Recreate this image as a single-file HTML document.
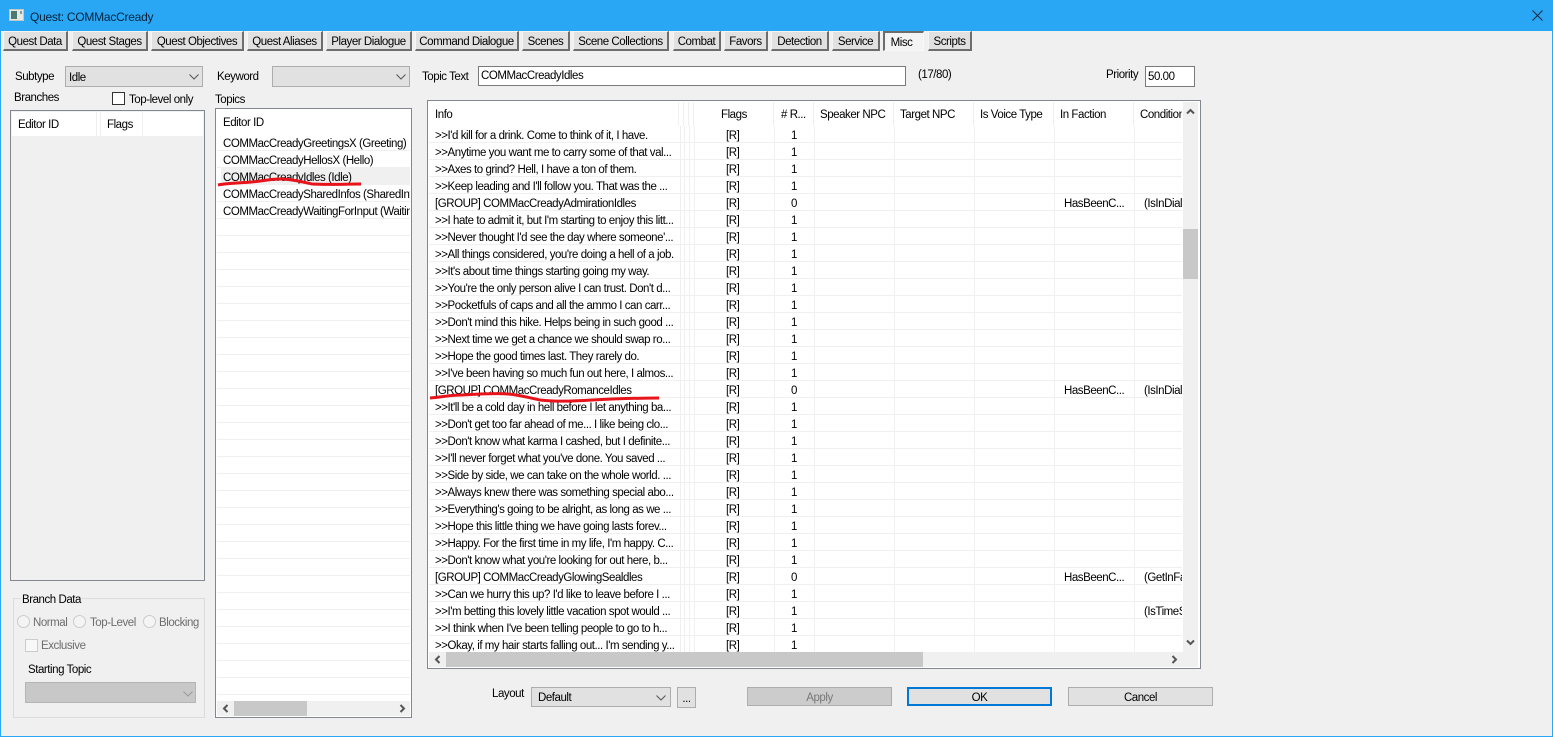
<!DOCTYPE html>
<html><head><meta charset="utf-8"><title>Quest: COMMacCready</title>
<style>
html,body{margin:0;padding:0;width:1553px;height:737px;overflow:hidden;background:#f0f0f0}
body{position:relative;font:11.5px/16px "Liberation Sans",sans-serif;letter-spacing:-.45px;color:#000}
.a{position:absolute;white-space:nowrap}
.l{position:absolute;white-space:nowrap;height:14px;line-height:16px}
.tab{position:absolute;top:31px;height:20px;box-sizing:border-box;background:#e1e1e1;border-top:1px solid #f4f4f4;border-left:1px solid #f4f4f4;border-right:2px solid #6d6d6d;border-bottom:2px solid #6d6d6d;text-align:center;line-height:20px;white-space:nowrap;overflow:hidden}
.combo{position:absolute;box-sizing:border-box;border:1px solid #adadad;background:#e1e1e1}
.box{position:absolute;box-sizing:border-box;border:1px solid #828790;background:#fff}
.btn{position:absolute;box-sizing:border-box;border:1px solid #adadad;background:#e1e1e1;text-align:center;line-height:20px}
.r{position:absolute;left:435px;height:14px;line-height:16px;white-space:nowrap}
.r b{font-weight:normal;position:absolute;top:0}
.vb{position:absolute;top:126px;height:526px;width:1px;background:#f0f0f0}
.vh{position:absolute;top:102px;height:24px;width:1px;background:#f0f0f0}
.radio{position:absolute;box-sizing:border-box;width:13px;height:13px;border:1px solid #ccc;border-radius:50%;background:#f4f4f4}
svg{position:absolute;overflow:visible}
</style></head><body>

<!-- window frame -->
<div class="a" style="left:0;top:0;width:1553px;height:31px;background:#29a6f4"></div>
<div class="a" style="left:0;top:0;width:1px;height:737px;background:#29a6f4"></div>
<div class="a" style="left:1552px;top:0;width:1px;height:737px;background:#29a6f4"></div>
<div class="a" style="left:0;top:736px;width:1553px;height:1px;background:#29a6f4"></div>

<!-- title icon -->
<div class="a" style="left:9px;top:9px;width:15px;height:12px;background:#e6e8e6;border:1px solid #c4c8c8;box-sizing:border-box"></div>
<div class="a" style="left:11px;top:11px;width:6px;height:8px;background:#4d7a70"></div>
<div class="a" style="left:20px;top:11px;width:2px;height:3px;background:#8a9aa0"></div>
<div class="l" style="left:30px;top:9px;color:#04233c;font-size:12px;letter-spacing:-.25px">Quest: COMMacCready</div>
<svg style="left:1532px;top:10px" width="11" height="11"><path d="M.5.5l10 10M10.500.5l-10 10" stroke="#0b2a40" fill="none"/></svg>

<!-- tabs -->
<div class="tab" style="left:3px;width:65px">Quest Data</div>
<div class="tab" style="left:72px;width:76px">Quest Stages</div>
<div class="tab" style="left:151px;width:93px">Quest Objectives</div>
<div class="tab" style="left:247px;width:76px">Quest Aliases</div>
<div class="tab" style="left:326px;width:86px">Player Dialogue</div>
<div class="tab" style="left:415px;width:104px">Command Dialogue</div>
<div class="tab" style="left:522px;width:48px">Scenes</div>
<div class="tab" style="left:573px;width:96px">Scene Collections</div>
<div class="tab" style="left:673px;width:48px">Combat</div>
<div class="tab" style="left:724px;width:44px">Favors</div>
<div class="tab" style="left:771px;width:58px">Detection</div>
<div class="tab" style="left:832px;width:48px">Service</div>
<div class="tab" style="left:883px;width:41px;box-sizing:border-box;padding-right:5px;background:#f4f4f4;border-top:2px solid #6d6d6d;border-left:2px solid #6d6d6d;border-right:1px solid #f8f8f8;border-bottom:1px solid #f8f8f8;line-height:20px">Misc</div>
<div class="tab" style="left:928px;width:44px">Scripts</div>

<!-- left top -->
<div class="l" style="left:15px;top:69px">Subtype</div>
<div class="combo" style="left:65px;top:66px;width:138px;height:21px"><span class="l" style="left:3px;top:3px">Idle</span>
<svg style="left:123px;top:7px" width="10" height="6"><path d="M.5.5l4.500 4.500 4.500-4.500" stroke="#555" fill="none"/></svg></div>
<div class="l" style="left:217px;top:69px">Keyword</div>
<div class="combo" style="left:272px;top:66px;width:138px;height:21px"><svg style="left:123px;top:7px" width="10" height="6"><path d="M.5.5l4.500 4.500 4.500-4.500" stroke="#555" fill="none"/></svg></div>
<div class="l" style="left:14px;top:90px">Branches</div>
<div class="a" style="left:112px;top:92px;width:13px;height:13px;box-sizing:border-box;border:1px solid #333;background:#fff"></div>
<div class="l" style="left:129px;top:92px">Top-level only</div>
<div class="l" style="left:215px;top:92px">Topics</div>

<!-- branches list -->
<div class="box" style="left:10px;top:110px;width:195px;height:471px;background:#f0f0f0"></div>
<div class="a" style="left:12px;top:112px;width:191px;height:24px;background:#fff"></div>
<div class="a" style="left:96px;top:112px;width:1px;height:24px;background:#f0f0f0"></div>
<div class="a" style="left:100px;top:112px;width:1px;height:24px;background:#f0f0f0"></div>
<div class="a" style="left:142px;top:112px;width:1px;height:24px;background:#f0f0f0"></div>
<div class="l" style="left:18px;top:117px">Editor ID</div>
<div class="l" style="left:107px;top:117px">Flags</div>

<!-- branch data -->
<div class="a" style="left:13px;top:598px;width:192px;height:120px;box-sizing:border-box;border:1px solid #dcdcdc"></div>
<div class="l" style="left:21px;top:592px;background:#f0f0f0;padding:0 1px">Branch Data</div>
<div class="radio" style="left:17px;top:615px"></div><div class="l" style="left:33px;top:615px;color:#6d6d6d">Normal</div>
<div class="radio" style="left:73px;top:615px"></div><div class="l" style="left:90px;top:615px;color:#6d6d6d">Top-Level</div>
<div class="radio" style="left:143px;top:615px"></div><div class="l" style="left:159px;top:615px;color:#6d6d6d">Blocking</div>
<div class="a" style="left:25px;top:639px;width:13px;height:13px;box-sizing:border-box;border:1px solid #ccc;background:#f8f8f8"></div>
<div class="l" style="left:41px;top:638px;color:#6d6d6d">Exclusive</div>
<div class="l" style="left:28px;top:662px">Starting Topic</div>
<div class="combo" style="left:25px;top:682px;width:171px;height:21px;background:#c8c8c8;border-color:#b5b5b5"><svg style="left:157px;top:8px" width="10" height="6"><path d="M.5.5l4.500 4.500 4.500-4.500" stroke="#999" fill="none"/></svg></div>

<!-- topics list -->
<div class="box" style="left:215px;top:108px;width:197px;height:610px"></div>
<div class="a" style="left:217px;top:150px;width:193px;height:551px;background:repeating-linear-gradient(to bottom,#f0f0f0 0,#f0f0f0 1px,transparent 1px,transparent 17px)"></div>
<div class="a" style="left:221px;top:167px;width:189px;height:17px;background:#f0f0f0"></div>
<div class="l" style="left:223px;top:115px">Editor ID</div>
<div class="a" style="left:223px;top:136px;width:187px;height:85px;overflow:hidden">
<div class="l" style="left:0;top:0">COMMacCreadyGreetingsX (Greeting)</div>
<div class="l" style="left:0;top:17px">COMMacCreadyHellosX (Hello)</div>
<div class="l" style="left:0;top:34px">COMMacCreadyIdles (Idle)</div>
<div class="l" style="left:0;top:51px">COMMacCreadySharedInfos (SharedInfo)</div>
<div class="l" style="left:0;top:68px">COMMacCreadyWaitingForInput (Waiting)</div>
</div>
<div class="a" style="left:217px;top:701px;width:193px;height:15px;background:#f0f0f0"></div>
<div class="a" style="left:234px;top:701px;width:73px;height:15px;background:#c8c8c8"></div>
<svg style="left:222px;top:704px" width="7" height="9"><path d="M5.500 1L2 4.500 5.500 8" stroke="#555" stroke-width="2" fill="none"/></svg>
<svg style="left:399px;top:704px" width="7" height="9"><path d="M1.500 1L5 4.500 1.500 8" stroke="#555" stroke-width="2" fill="none"/></svg>

<!-- topic text -->
<div class="l" style="left:422px;top:69px">Topic Text</div>
<div class="a" style="left:478px;top:66px;width:428px;height:20px;box-sizing:border-box;border:1px solid #7a7a7a;background:#fff;padding:1px 2px;line-height:16px">COMMacCreadyIdles</div>
<div class="l" style="left:918px;top:67px">(17/80)</div>
<div class="l" style="left:1106px;top:67px">Priority</div>
<div class="a" style="left:1145px;top:66px;width:50px;height:21px;box-sizing:border-box;border:1px solid #7a7a7a;background:#fff;padding:2px 2px;line-height:16px">50.00</div>

<!-- main list -->
<div class="box" style="left:427px;top:100px;width:774px;height:569px"></div>
<div class="a" style="left:429px;top:142px;width:753px;height:510px;background:repeating-linear-gradient(to bottom,#f0f0f0 0,#f0f0f0 1px,transparent 1px,transparent 17px)"></div>

<div class="vh" style="left:678px"></div><div class="vh" style="left:683px"></div><div class="vh" style="left:688px"></div><div class="vh" style="left:693px"></div><div class="vh" style="left:773px"></div><div class="vh" style="left:813px"></div><div class="vh" style="left:893px"></div><div class="vh" style="left:973px"></div><div class="vh" style="left:1053px"></div><div class="vh" style="left:1133px"></div>
<div class="vb" style="left:680px"></div><div class="vb" style="left:684px"></div><div class="vb" style="left:689px"></div><div class="vb" style="left:694px"></div><div class="vb" style="left:774px"></div><div class="vb" style="left:814px"></div><div class="vb" style="left:894px"></div><div class="vb" style="left:974px"></div><div class="vb" style="left:1054px"></div><div class="vb" style="left:1134px"></div>

<div class="l" style="left:435px;top:107px">Info</div>
<div class="l" style="left:721px;top:107px">Flags</div>
<div class="l" style="left:781px;top:107px">#&nbsp;R...</div>
<div class="l" style="left:820px;top:107px">Speaker NPC</div>
<div class="l" style="left:900px;top:107px">Target NPC</div>
<div class="l" style="left:980px;top:107px">Is Voice Type</div>
<div class="l" style="left:1060px;top:107px">In Faction</div>
<div class="a" style="left:1140px;top:107px;width:42px;height:16px;overflow:hidden">Conditions</div>

<div class="a" style="left:0;top:0;width:1182px;height:652px;overflow:hidden">
<div class="r" style="top:128px">&gt;&gt;I'd kill for a drink. Come to think of it, I have.<b style="left:291px">[R]</b><b style="left:356px">1</b></div>
<div class="r" style="top:145px">&gt;&gt;Anytime you want me to carry some of that val...<b style="left:291px">[R]</b><b style="left:356px">1</b></div>
<div class="r" style="top:162px">&gt;&gt;Axes to grind? Hell, I have a ton of them.<b style="left:291px">[R]</b><b style="left:356px">1</b></div>
<div class="r" style="top:179px">&gt;&gt;Keep leading and I'll follow you. That was the ...<b style="left:291px">[R]</b><b style="left:356px">1</b></div>
<div class="r" style="top:196px">[GROUP] COMMacCreadyAdmirationIdles<b style="left:291px">[R]</b><b style="left:356px">0</b><b style="left:629px">HasBeenC...</b><b style="left:709px">(IsInDial</b></div>
<div class="r" style="top:213px">&gt;&gt;I hate to admit it, but I'm starting to enjoy this litt...<b style="left:291px">[R]</b><b style="left:356px">1</b></div>
<div class="r" style="top:230px">&gt;&gt;Never thought I'd see the day where someone'...<b style="left:291px">[R]</b><b style="left:356px">1</b></div>
<div class="r" style="top:247px">&gt;&gt;All things considered, you're doing a hell of a job.<b style="left:291px">[R]</b><b style="left:356px">1</b></div>
<div class="r" style="top:264px">&gt;&gt;It's about time things starting going my way.<b style="left:291px">[R]</b><b style="left:356px">1</b></div>
<div class="r" style="top:281px">&gt;&gt;You're the only person alive I can trust. Don't d...<b style="left:291px">[R]</b><b style="left:356px">1</b></div>
<div class="r" style="top:298px">&gt;&gt;Pocketfuls of caps and all the ammo I can carr...<b style="left:291px">[R]</b><b style="left:356px">1</b></div>
<div class="r" style="top:315px">&gt;&gt;Don't mind this hike. Helps being in such good ...<b style="left:291px">[R]</b><b style="left:356px">1</b></div>
<div class="r" style="top:332px">&gt;&gt;Next time we get a chance we should swap ro...<b style="left:291px">[R]</b><b style="left:356px">1</b></div>
<div class="r" style="top:349px">&gt;&gt;Hope the good times last. They rarely do.<b style="left:291px">[R]</b><b style="left:356px">1</b></div>
<div class="r" style="top:366px">&gt;&gt;I've been having so much fun out here, I almos...<b style="left:291px">[R]</b><b style="left:356px">1</b></div>
<div class="r" style="top:383px">[GROUP] COMMacCreadyRomanceIdles<b style="left:291px">[R]</b><b style="left:356px">0</b><b style="left:629px">HasBeenC...</b><b style="left:709px">(IsInDial</b></div>
<div class="r" style="top:400px">&gt;&gt;It'll be a cold day in hell before I let anything ba...<b style="left:291px">[R]</b><b style="left:356px">1</b></div>
<div class="r" style="top:417px">&gt;&gt;Don't get too far ahead of me... I like being clo...<b style="left:291px">[R]</b><b style="left:356px">1</b></div>
<div class="r" style="top:434px">&gt;&gt;Don't know what karma I cashed, but I definite...<b style="left:291px">[R]</b><b style="left:356px">1</b></div>
<div class="r" style="top:451px">&gt;&gt;I'll never forget what you've done. You saved ...<b style="left:291px">[R]</b><b style="left:356px">1</b></div>
<div class="r" style="top:468px">&gt;&gt;Side by side, we can take on the whole world. ...<b style="left:291px">[R]</b><b style="left:356px">1</b></div>
<div class="r" style="top:485px">&gt;&gt;Always knew there was something special abo...<b style="left:291px">[R]</b><b style="left:356px">1</b></div>
<div class="r" style="top:502px">&gt;&gt;Everything's going to be alright, as long as we ...<b style="left:291px">[R]</b><b style="left:356px">1</b></div>
<div class="r" style="top:519px">&gt;&gt;Hope this little thing we have going lasts forev...<b style="left:291px">[R]</b><b style="left:356px">1</b></div>
<div class="r" style="top:536px">&gt;&gt;Happy. For the first time in my life, I'm happy. C...<b style="left:291px">[R]</b><b style="left:356px">1</b></div>
<div class="r" style="top:553px">&gt;&gt;Don't know what you're looking for out here, b...<b style="left:291px">[R]</b><b style="left:356px">1</b></div>
<div class="r" style="top:570px">[GROUP] COMMacCreadyGlowingSealdles<b style="left:291px">[R]</b><b style="left:356px">0</b><b style="left:629px">HasBeenC...</b><b style="left:709px">(GetInFa</b></div>
<div class="r" style="top:587px">&gt;&gt;Can we hurry this up? I'd like to leave before I ...<b style="left:291px">[R]</b><b style="left:356px">1</b></div>
<div class="r" style="top:604px">&gt;&gt;I'm betting this lovely little vacation spot would ...<b style="left:291px">[R]</b><b style="left:356px">1</b><b style="left:709px">(IsTimeS</b></div>
<div class="r" style="top:621px">&gt;&gt;I think when I've been telling people to go to h...<b style="left:291px">[R]</b><b style="left:356px">1</b></div>
<div class="r" style="top:638px">&gt;&gt;Okay, if my hair starts falling out... I'm sending y...<b style="left:291px">[R]</b><b style="left:356px">1</b></div>
</div>

<!-- vertical scrollbar -->
<div class="a" style="left:1183px;top:102px;width:15px;height:565px;background:#f0f0f0"></div>
<div class="a" style="left:1183px;top:229px;width:15px;height:50px;background:#c8c8c8"></div>
<svg style="left:1186px;top:108px" width="9" height="7"><path d="M1 5.500L4.500 2 8 5.500" stroke="#555" stroke-width="2" fill="none"/></svg>
<svg style="left:1186px;top:639px" width="9" height="7"><path d="M1 1.500L4.500 5 8 1.500" stroke="#555" stroke-width="2" fill="none"/></svg>
<!-- horizontal scrollbar -->
<div class="a" style="left:429px;top:652px;width:754px;height:15px;background:#c8c8c8"></div>
<div class="a" style="left:429px;top:652px;width:17px;height:15px;background:#f0f0f0"></div>
<div class="a" style="left:923px;top:652px;width:260px;height:15px;background:#f0f0f0"></div>
<svg style="left:434px;top:655px" width="7" height="9"><path d="M5.500 1L2 4.500 5.500 8" stroke="#555" stroke-width="2" fill="none"/></svg>
<svg style="left:1171px;top:655px" width="7" height="9"><path d="M1.500 1L5 4.500 1.500 8" stroke="#555" stroke-width="2" fill="none"/></svg>

<!-- bottom -->
<div class="l" style="left:492px;top:686px">Layout</div>
<div class="combo" style="left:531px;top:687px;width:140px;height:20px"><span class="l" style="left:6px;top:2px">Default</span><svg style="left:124px;top:7px" width="10" height="6"><path d="M.5.5l4.500 4.500 4.500-4.500" stroke="#555" fill="none"/></svg></div>
<div class="btn" style="left:677px;top:687px;width:19px;height:21px;line-height:22px">...</div>
<div class="btn" style="left:747px;top:687px;width:145px;height:19px;background:#ccc;color:#787878">Apply</div>
<div class="btn" style="left:907px;top:687px;width:145px;height:19px;border:2px solid #0078d7;line-height:18px">OK</div>
<div class="btn" style="left:1068px;top:687px;width:145px;height:19px">Cancel</div>

<!-- red annotations -->
<svg style="left:0;top:0" width="1553" height="737">
<path d="M218 185C228 183 240 183 252 182 C262 181 270 179 281 179 C292 179 302 182 312 184 C328 185 345 184 361 184" stroke="#e8141c" stroke-width="3" fill="none"/>
<path d="M430 398C442 397 450 395 462 395 C480 394 495 393 508 394 C520 395 530 398 540 400 C558 402 575 401 592 400 C612 399 635 398 659 398" stroke="#e8141c" stroke-width="3" fill="none"/>
</svg>
</body></html>
